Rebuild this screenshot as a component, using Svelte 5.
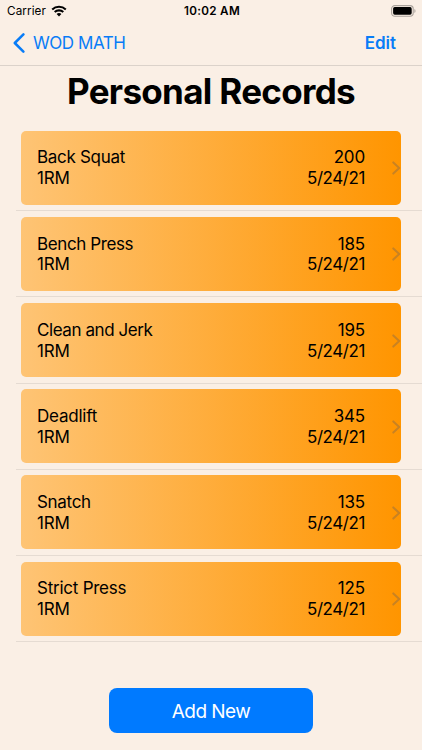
<script>
  const records = [
    { name: 'Back Squat', weight: 200, spacing: -0.3 },
    { name: 'Bench Press', weight: 185, spacing: -0.4 },
    { name: 'Clean and Jerk', weight: 195, spacing: -0.43 },
    { name: 'Deadlift', weight: 345, spacing: -0.22 },
    { name: 'Snatch', weight: 135, spacing: -0.3 },
    { name: 'Strict Press', weight: 125, spacing: -0.24 }
  ];
</script>

<div class="screen">
  <header class="status">
    <div class="carrier">
      <span>Carrier</span>
      <svg class="wifi" width="16" height="12" viewBox="0 0 16 12" aria-hidden="true">
        <path d="M1.2 4.4C5 .9 11 .9 14.8 4.4" />
        <path d="M3.7 7C6.1 4.8 9.9 4.8 12.3 7" />
        <path class="dot" d="M5.6 9C7 7.8 9 7.8 10.4 9L8 11.4Z" />
      </svg>
    </div>
    <span class="time">10:02 AM</span>
    <svg class="battery" width="26" height="12" viewBox="0 0 26 12" aria-hidden="true">
      <rect x="0.6" y="0.6" width="21.6" height="10.6" rx="3.2" />
      <rect class="charge" x="2.1" y="2.1" width="18.6" height="7.6" rx="1.6" />
      <path d="M23.4 4v4c1.5-.5 1.5-3.5 0-4Z" />
    </svg>
  </header>
  <nav>
    <button class="back">
      <svg width="12" height="20" viewBox="0 0 12 20" aria-hidden="true"><path d="M10.4 1.4 1.8 10l8.6 8.6" /></svg>
      <span>WOD MATH</span>
    </button>
    <button class="edit">Edit</button>
  </nav>
  <h1>Personal Records</h1>
  <ul>
    {#each records as record}
      <li>
        <div class="card">
          <div class="info"><span style="letter-spacing: {record.spacing}px">{record.name}</span><span>1RM</span></div>
          <div class="info value"><span>{record.weight}</span><span class="date">5/24/21</span></div>
          <svg class="chevron" width="9" height="14" viewBox="0 0 9 14" aria-hidden="true"><path d="M1.3 1.4 7.2 7l-5.9 5.6" /></svg>
        </div>
      </li>
    {/each}
  </ul>
  <button class="add">Add New</button>
</div>

<style>
  :global(body) { background: #faefe5; }
  .screen {
    box-sizing: border-box;
    width: 422px;
    height: 750px;
    overflow: hidden;
    display: flex;
    flex-direction: column;
    background: #faefe5;
    color: #000;
    font-family: Inter, "Liberation Sans", sans-serif;
  }
  button {
    border: 0;
    padding: 0;
    background: none;
    font: inherit;
    color: #087cf7;
  }
  svg { display: block; fill: none; flex: none; }
  .status {
    height: 22px;
    flex: none;
    display: grid;
    grid-template-columns: 1fr auto 1fr;
    align-items: center;
    padding: 0 5px 0 7px;
    box-sizing: border-box;
    font-size: 11.7px;
  }
  .carrier { display: flex; align-items: center; gap: 5px; letter-spacing: 0.1px; }
  .wifi path { stroke: #000; stroke-width: 2.1; }
  .wifi .dot { fill: #000; stroke: none; }
  .time { font-weight: 600; letter-spacing: 0.3px; }
  .battery { justify-self: end; fill: #aaa39c; }
  .battery rect { fill: none; stroke: #aaa39c; stroke-width: 1.1; }
  .battery .charge { fill: #000; stroke: none; }
  nav {
    height: 44px;
    flex: none;
    box-sizing: border-box;
    display: flex;
    align-items: center;
    justify-content: space-between;
    padding: 0 26px 1px 13px;
    border-bottom: 1px solid #dbd2ca;
    font-size: 17px;
  }
  .back { display: flex; align-items: center; gap: 8px; letter-spacing: -0.45px; }
  .back path { stroke: #087cf7; stroke-width: 2.5; stroke-linecap: round; stroke-linejoin: round; }
  .edit { font-weight: 600; }
  h1 {
    margin: 0;
    height: 59px;
    flex: none;
    line-height: 51px;
    text-align: center;
    font-size: 35px;
    font-weight: 700;
    letter-spacing: -0.68px;
  }
  ul { list-style: none; margin: 0 0 0 16px; padding: 0; }
  li {
    height: 86.2px;
    box-sizing: border-box;
    padding: 5.7px 21px 0 5px;
    border-bottom: 1px solid #e5dbd2;
  }
  .card {
    height: 74px;
    box-sizing: border-box;
    display: flex;
    align-items: center;
    padding: 1px 0 0 16px;
    border-radius: 5px;
    background: linear-gradient(90deg, #fec475, #ff9500);
  }
  .info { display: flex; flex-direction: column; font-size: 17px; line-height: 20.7px; letter-spacing: -0.15px; }
  .value { margin-left: auto; margin-right: 27px; text-align: right; }
  .date { letter-spacing: -0.42px; }
  .chevron path { stroke: #c98222; stroke-width: 2; stroke-linecap: round; stroke-linejoin: round; }
  .add {
    flex: none;
    width: 204px;
    height: 45px;
    margin: 46px 0 0 109px;
    padding-top: 1px;
    border-radius: 8px;
    background: #007aff;
    color: #fff;
    font-size: 19px;
    letter-spacing: -0.55px;
  }
</style>
